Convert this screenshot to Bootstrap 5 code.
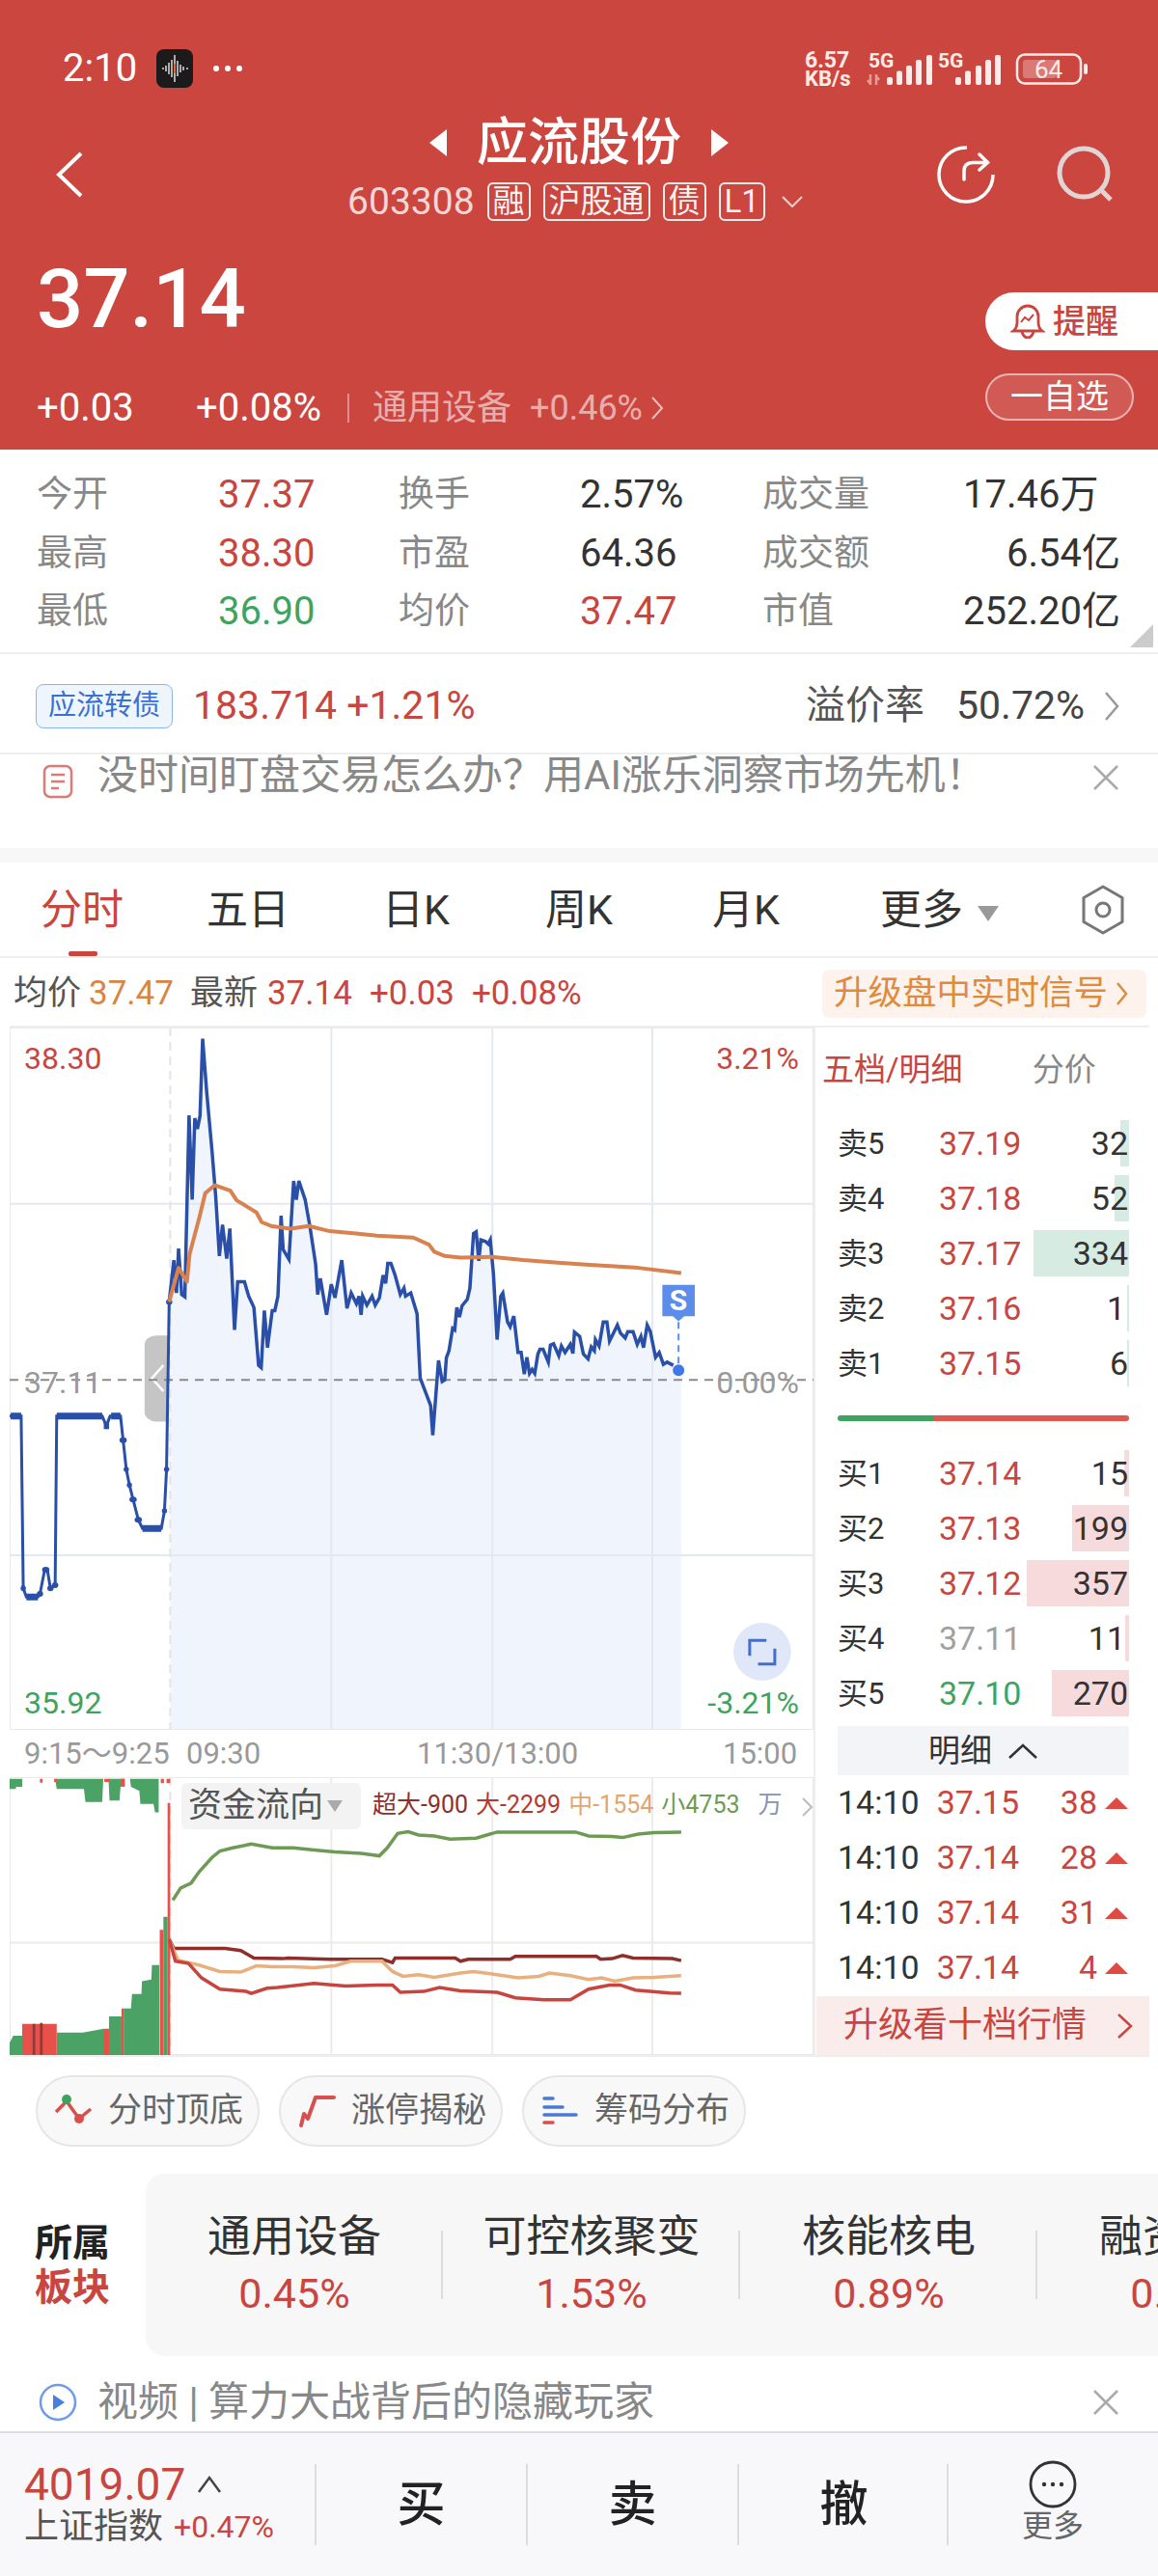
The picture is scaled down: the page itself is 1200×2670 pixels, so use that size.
<!DOCTYPE html>
<html lang="zh"><head><meta charset="utf-8"><title>应流股份</title>
<link href="https://cdn.jsdelivr.net/npm/bootstrap@5.3.0/dist/css/bootstrap.min.css" rel="stylesheet">
<style>
html,body{margin:0;width:1200px;height:2670px;overflow:hidden;background:#fff}
body{font-family:Roboto,"Noto Sans CJK SC",sans-serif;color:#333;line-height:1.2}
.rd{color:#c9453f}.gn{color:#3ea35f}.gy{color:#888}
.hdr{height:466px;background:#cc4640;color:#fff}
.sbar{padding:50px 70px 0 65px;height:92px}
.clock{font-size:40px;line-height:42px;width:97px}
.appic{width:38px;height:40px;background:#1c1a1a;border-radius:8px;margin-right:20px}
.nav-r{height:137px;padding-top:18px}
.side{width:300px}
.mid{width:600px}
.ttl{font-size:53px;line-height:76px;font-weight:500;height:76px;gap:31px}
.code{font-size:39px;line-height:40px;height:40px;margin-top:3px;margin-left:-8px;gap:13px}
.code .cd{color:rgba(255,255,255,.78)}
.tg{border:2px solid rgba(255,255,255,.9);border-radius:6px;font-size:33px;line-height:36px;height:40px;padding:0 4px;color:rgba(255,255,255,.95)}
.backi{margin:46px 0 0 56px}
.refi{margin:36px 0 0 66px}
.srci{margin:36px 0 0 54px}
.pr{font-size:85px;line-height:64px;font-weight:500;margin:49px 0 0 38px;height:64px}
.chg{margin:59px 0 0 38px;height:44px;font-size:40px;line-height:44px}
.chg .dim{color:rgba(255,255,255,.58);font-size:36px}
.vbar{width:2px;height:30px;background:rgba(255,255,255,.4)}
.rbtns{width:179px;margin-top:74px}
.remind{height:60px;background:#fff;color:#c9453f;border-radius:30px 0 0 30px;font-size:34px;padding-left:26px;gap:8px;font-weight:500}
.fav{width:154px;height:49px;border:2px solid rgba(255,255,255,.55);background:rgba(255,255,255,.11);border-radius:25px;font-size:34px;margin-top:24px}
.stats{display:grid;grid-template-columns:188px 187px 188px 189px 1fr auto;grid-auto-rows:60.5px;padding:17px 39px 0 38px;height:212px;font-size:37px;border-bottom:2px solid #eee;align-items:center;position:relative}
.stats .lb{color:#888}.stats .num{font-size:40px}
.corner{position:absolute;right:5px;bottom:5px;width:0;height:0;border-left:24px solid transparent;border-bottom:24px solid #ccc}
.bond{height:104px;border-bottom:2px solid #eee;padding:5px 40px 0 37px;font-size:41px}
.btag{width:142px;height:46px;border:1.5px solid #8db4ea;background:#eef5fd;color:#3a70d6;border-radius:8px;font-size:29px;line-height:43px;text-align:center;margin-right:21px}
.note{height:97px;padding:2px 40px 0 44px;align-items:flex-start;background:#fff}
.note .t{font-size:42px;line-height:40px;color:#888;margin-left:25px;white-space:nowrap}
.band{height:15px;background:#f7f7f7}
.tabs{height:99px;border-bottom:2px solid #eee;font-size:43px;position:relative;padding-top:23px;line-height:52px}
.tabu{position:absolute;left:71px;bottom:0;width:30px;height:5px;background:#c9453f;border-radius:2px}
.tb{position:absolute;top:23px}
.info{height:70px;font-size:35px;padding:3px 12px 0 14px}
.upg{height:50px;width:336px;background:#fdf3ec;color:#e08a3e;border-radius:8px;font-size:35.5px;padding-left:12px}
.chartrow{display:flex;height:1069px;border-top:2px solid #eee;border-bottom:2px solid #eee;margin:0 9px 0 10px}
.lcol{width:833px;position:relative}
.cv{display:block;width:833px}
.ln{fill:none;vector-effect:non-scaling-stroke}
.lab{position:absolute;font-size:32px;line-height:36px}
.axis{height:49px;font-size:31px;color:#999;position:relative;line-height:50px}
.axis span{position:absolute}
.fund{position:absolute;left:178px;top:783px;width:186px;height:48px;background:#f3f3f3;border-radius:6px;font-size:35px;line-height:48px;color:#555;padding-left:7px}
.leg{position:absolute;left:376px;top:790px;font-size:25px;line-height:32px;white-space:nowrap}
.rcol{width:348px;border-left:2px solid #eee;display:flex;flex-direction:column}
.ob{margin:0 21px 0 23px}
.obh{height:92px;font-size:33px;padding:26px 0 0 0;line-height:36px;margin-left:-16px}
.obr{height:57px;font-size:34px;position:relative;display:flex;align-items:center}
.obr .k{width:105px;font-size:31px;position:relative}
.obr .p{position:relative}
.obr .q{margin-left:auto;position:relative;padding-right:1px}
.dep{position:absolute;right:0;top:4px;height:48px}
.dg{background:#d6ece2}.dr{background:#f6dadc}
.split{height:57px;padding-top:25px}
.split i{display:block;height:6px;border-radius:3px;background:linear-gradient(90deg,#3ea35f 33%,#df5850 33%)}
.mx{height:51px;margin-top:5px;background:#f2f4f8;font-size:33px;gap:16px}
.tr{height:57px;font-size:34px;display:flex;align-items:center}
.tr .p{margin-left:18px}
.tr .q{margin-left:auto;margin-right:8px}
.tri{width:0;height:0;border-left:12.5px solid transparent;border-right:12.5px solid transparent;border-bottom:12px solid #df4a43;margin-right:1px}
.up10{height:61px;margin:1px 0 0 1px;background:#fbecec;color:#c9453f;font-size:36px;padding:0 15px 0 28px}
.pills{height:121px;padding:19px 0 0 37px;gap:20px}
.pil{width:232px;height:74px;border:2px solid #e6e6e6;background:#f8f8f8;border-radius:37px;font-size:35px;color:#666;padding-left:17px;gap:14px}
.sect{height:189px}
.sl{width:151px;padding-left:36px;font-size:39px;font-weight:700;line-height:46px;color:#222}
.scard{flex:1;background:#f7f7f7;border-radius:20px 0 0 20px;overflow:hidden;height:189px}
.si{flex:0 0 308px;text-align:center;position:relative;padding-top:40px;font-size:45px;line-height:52px;white-space:nowrap}
.si .pc{font-size:43px;line-height:48px;margin-top:8px}
.si::after{content:"";position:absolute;right:0;top:59px;width:2px;height:71px;background:#ddd}
.vid{height:78px;padding:18px 40px 0 40px;font-size:42px;color:#888;gap:21px;line-height:48px}
.foot{height:150px;background:#f8f8fb;border-top:2px solid #ddd}
.fidx{width:326px;padding:28px 0 0 25px}
.fidx .v{font-size:46px;line-height:50px;gap:12px}
.fidx .s{font-size:36px;line-height:44px;color:#555;gap:11px;margin-top:-3px}
.fidx .s b{font-size:32px;font-weight:400}
.fb{width:219px;height:84px;margin-top:32px;border-left:2px solid #ddd;font-size:50px;font-weight:500;color:#222}
.fmore{margin-top:28px;height:96px;width:216px;position:relative}
.fmore::before{content:"";position:absolute;left:-2px;top:4px;width:2px;height:84px;background:#ddd}
.fm{font-size:32px;color:#666;font-weight:400;line-height:36px}
</style></head><body>
<div class="hdr">
 <div class="sbar d-flex align-items-center">
  <div class="clock">2:10</div>
  <div class="appic d-flex align-items-center justify-content-center"><svg width="30" height="34" viewBox="0 0 30 34"><path d="M2 17h2M6 14v6M9 11v12M12 8v18M15 3v28M18 9v16M21 13v8M24 15v4M27 17h2" stroke="#ddd" stroke-width="1.500" fill="none"/><path d="M15 12v10" stroke="#e8663c" stroke-width="2"/></svg></div>
  <svg width="34" height="8" viewBox="0 0 34 8"><circle cx="4" cy="4" r="3" fill="#fff"/><circle cx="16" cy="4" r="3" fill="#fff"/><circle cx="28" cy="4" r="3" fill="#fff"/></svg>
  <svg class="ms-auto" width="300" height="50" viewBox="830 46 300 50" font-family="Roboto,sans-serif" font-weight="700" fill="#ffecea">
   <text x="834" y="70" font-size="23">6.57</text><text x="834" y="89" font-size="22">KB/s</text>
   <text x="900" y="70" font-size="21">5G</text><text x="972" y="70" font-size="21">5G</text>
   <path d="M902 77v11M899 83l3 4M908 88V77M911 83l-3-4" stroke="#e89a94" stroke-width="2.500" fill="none"/>
   <g fill="#ffecea"><rect x="919" y="80" width="6" height="8" rx="2"/><rect x="929" y="73.500" width="6" height="14.500" rx="2"/><rect x="939" y="68" width="6" height="20" rx="2"/><rect x="949" y="62" width="6" height="26" rx="2"/><rect x="960" y="57" width="6" height="31" rx="2"/>
   <rect x="990" y="80" width="6" height="8" rx="2"/><rect x="1000" y="73.500" width="6" height="14.500" rx="2"/><rect x="1011" y="68" width="6" height="20" rx="2"/><rect x="1021" y="62" width="6" height="26" rx="2"/><rect x="1031" y="57" width="6" height="31" rx="2"/></g>
   <rect x="1054" y="56.500" width="66" height="30" rx="8" fill="none" stroke="#ffecea" stroke-width="2.500"/><rect x="1060" y="62" width="35" height="19" rx="3" fill="#fff" opacity=".28"/>
   <rect x="1123" y="66" width="4" height="11" rx="2"/><text x="1072" y="81" font-size="26" font-weight="400">64</text>
  </svg>
 </div>
 <div class="nav-r d-flex">
  <div class="side"><svg class="backi" width="32" height="50" viewBox="0 0 32 50"><path d="M28 3L5 25l23 22" fill="none" stroke="#fff" stroke-width="4"/></svg></div>
  <div class="mid">
   <div class="ttl d-flex justify-content-center align-items-center"><svg width="18" height="28" viewBox="0 0 18 28"><path d="M18 0v28L0 14z" fill="#fff"/></svg><span>应流股份</span><svg width="18" height="28" viewBox="0 0 18 28"><path d="M0 0v28l18-14z" fill="#fff"/></svg></div>
   <div class="code d-flex justify-content-center align-items-center"><span class="cd">603308</span><span class="tg">融</span><span class="tg">沪股通</span><span class="tg">债</span><span class="tg">L1</span><svg class="ms-1" width="22" height="12" viewBox="0 0 22 12"><path d="M1 1l10 10L21 1" fill="none" stroke="rgba(255,255,255,.75)" stroke-width="2"/></svg></div>
  </div>
  <div class="side d-flex align-items-start"><svg class="refi" width="70" height="70" viewBox="0 0 70 70" fill="none" stroke="#fff" stroke-width="3.500"><path d="M36 7A28 28 0 1 0 63 35"/><path d="M33 40V31q0-8 9-8.500H57M49 14l8.500 8.500L49 30" stroke-linecap="round"/></svg><svg class="srci" width="70" height="70" viewBox="0 0 70 70" fill="none" stroke="#e0d5d4" stroke-width="5"><circle cx="33" cy="33" r="25"/><path d="M51 51l10 10"/></svg></div>
 </div>
 <div class="d-flex justify-content-between">
  <div>
   <div class="pr">37.14</div>
   <div class="chg d-flex align-items-center"><span style="width:165px">+0.03</span><span style="width:157px">+0.08%</span><span class="vbar"></span><span class="dim ms-4" style="width:163px">通用设备</span><span class="dim" style="width:125px">+0.46%</span><svg width="14" height="26" viewBox="0 0 14 26"><path d="M2 2l10 11L2 24" fill="none" stroke="rgba(255,255,255,.65)" stroke-width="2"/></svg></div>
  </div>
  <div class="rbtns">
   <div class="remind d-flex align-items-center"><svg width="36" height="36" viewBox="0 0 36 36" fill="none" stroke="#c9453f" stroke-width="2.800"><path d="M3 28q4-3 4-9v-6a11 11 0 0 1 22 0v6q0 6 4 9zM12 29q2 6 6 6t6-6"/><path d="M11 19l4-5 4 3 5-6" stroke-width="2"/></svg><span>提醒</span></div>
   <div class="fav d-flex align-items-center justify-content-center"><span>一自选</span></div>
  </div>
 </div>
</div>

<div class="stats">
 <span class="lb">今开</span><span class="num rd">37.37</span><span class="lb">换手</span><span class="num">2.57%</span><span class="lb">成交量</span><span class="num">17.46万</span>
 <span class="lb">最高</span><span class="num rd">38.30</span><span class="lb">市盈</span><span class="num">64.36</span><span class="lb">成交额</span><span class="num text-end">6.54亿</span>
 <span class="lb">最低</span><span class="num gn">36.90</span><span class="lb">均价</span><span class="num rd">37.47</span><span class="lb">市值</span><span class="num">252.20亿</span>
 <i class="corner"></i>
</div>

<div class="bond d-flex align-items-center">
 <span class="btag">应流转债</span><span class="rd">183.714 +1.21%</span>
 <span class="ms-auto" style="color:#555">溢价率</span><span style="color:#444;width:129px;margin-left:33px">50.72%</span>
 <svg class="ms-4" width="16" height="32" viewBox="0 0 16 32"><path d="M2 2l12 14L2 30" fill="none" stroke="#999" stroke-width="2.500"/></svg>
</div>

<div class="note d-flex">
 <svg class="mt-2" width="32" height="36" viewBox="0 0 32 36" fill="none" stroke="#dc7a76" stroke-width="2.500"><rect x="2" y="2" width="28" height="32" rx="6"/><path d="M9 11h14M9 18h14M9 25h8"/></svg>
 <span class="t">没时间盯盘交易怎么办？用AI涨乐洞察市场先机！</span>
 <svg class="ms-auto mt-2" width="28" height="28" viewBox="0 0 28 28"><path d="M2 2l24 24M26 2L2 26" stroke="#aaa" stroke-width="2.500"/></svg>
</div>
<div class="band"></div>

<div class="tabs">
 <span class="tb rd" style="left:42px">分时</span><span class="tb" style="left:214px">五日</span><span class="tb" style="left:396px">日K</span><span class="tb" style="left:565px">周K</span><span class="tb" style="left:738px">月K</span><span class="tb" style="left:912px">更多</span>
 <svg class="tb" style="left:1013px;top:45px" width="22" height="16" viewBox="0 0 22 16"><path d="M0 0h22L11 16z" fill="#999"/></svg>
 <svg class="tb" style="left:1120px;top:23px" width="46" height="52" viewBox="0 0 46 52" fill="none" stroke="#777" stroke-width="3"><path d="M23 2l20 11.500v25L23 50 3 38.500v-25z" stroke-linejoin="round"/><circle cx="23" cy="26" r="7"/></svg>
 <i class="tabu"></i>
</div>

<div class="info d-flex align-items-center">
 <span style="color:#555">均价</span><span class="ms-2" style="color:#d88444">37.47</span>
 <span style="margin-left:17px;color:#555">最新</span><span class="rd" style="margin-left:10px">37.14</span>
 <span class="rd" style="margin-left:18px">+0.03</span><span class="rd" style="margin-left:18px">+0.08%</span>
 <div class="upg ms-auto d-flex align-items-center gap-2"><span>升级盘中实时信号</span><svg width="13" height="26" viewBox="0 0 13 26"><path d="M2 2l9 11-9 11" fill="none" stroke="#e08a3e" stroke-width="2.500"/></svg></div>
</div>

<div class="chartrow">
 <div class="lcol">
  <svg class="cv" height="728" viewBox="18 15 1537 2183" preserveAspectRatio="none">
   <polygon fill="#eff4fd" points="325,868 332,738 337,840 341,702 347,845 353,852 361,288 367,550 372,297 377,330 382,290 387,50 395,220 405,400 412,540 419,725 425,628 433,733 439,640 448,955 454,805 467,805 475,850 485,885 494,1065 499,1072 505,895 511,1010 520,895 525,895 531,850 537,600 541,705 552,735 561,492 566,550 571,492 583,550 592,632 603,750 607,845 612,795 624,908 633,813 640,855 653,738 663,888 671,840 681,873 686,850 690,908 693,850 701,878 711,850 717,878 725,855 732,785 737,810 741,748 747,748 755,785 765,845 772,825 775,850 785,840 797,905 803,1105 823,1190 827,1282 838,1050 845,1115 850,1110 853,1042 858,1020 865,950 869,955 873,885 878,915 883,880 893,860 898,825 905,655 910,650 915,740 919,675 928,680 933,688 937,675 943,780 950,985 957,850 961,840 970,930 975,945 982,912 990,1025 996,1025 1002,1092 1007,1040 1012,1090 1017,1078 1022,1090 1028,1030 1032,1015 1038,1015 1048,1055 1052,1002 1058,998 1068,1035 1073,1005 1080,1025 1090,1000 1095,1028 1098,962 1108,975 1115,1030 1124,1045 1130,1008 1136,1020 1138,985 1145,1005 1153,930 1160,930 1165,990 1180,940 1186,965 1195,980 1200,960 1210,960 1218,1000 1225,975 1230,1010 1237,940 1243,960 1253,1040 1260,1025 1268,1062 1275,1055 1287,1065 1297,1080 1302,1080 1302,2198 325,2198"/>
   <path class="ln" stroke="#e4e8f0" stroke-width="2" d="M633 15V2198M941 15V2198M1247 15V2198M18 563H1555M18 1655H1555"/>
   <path class="ln" d="M325 15V2198" stroke="#e4e4e4" stroke-width="2" stroke-dasharray="9 6"/>
   <rect class="ln" x="18" y="15" width="1537" height="2183" stroke="#e9e9e9" stroke-width="2"/>
   <path d="M322 972h-24a22 30 0 0 0-22 30v208a22 30 0 0 0 22 30h24z" fill="#c5c5c5"/>
   <path class="ln" d="M312 1065l-22 40 22 40" stroke="#fff" stroke-width="2.500"/>
   <path class="ln" d="M18 1110H1555" stroke="#8a8a8a" stroke-width="2" stroke-dasharray="9 7"/>
   <polyline class="ln" stroke="#2a4fa8" stroke-width="3" points="18,1223 40,1223 44,1758 50,1785 72,1785 76,1775 85,1700 90,1700 96,1758 105,1748 108,1223 195,1223 203,1253 210,1223 230,1223 235,1298 241,1388 247,1437 254,1482 264,1545 272,1572 308,1572 314,1517 318,1388 323,868"/>
   <path class="ln" stroke="#2a4fa8" stroke-width="7" d="M20 1223H40M108 1223H195M212 1223H230M50 1785H72M272 1572H308M198 1253H208"/>
   <g fill="#2a4fa8"><ellipse cx="44" cy="1758" rx="5" ry="9"/><ellipse cx="76" cy="1775" rx="6" ry="9"/><ellipse cx="87" cy="1700" rx="7" ry="9"/><ellipse cx="96" cy="1758" rx="6" ry="9"/><ellipse cx="105" cy="1748" rx="6" ry="9"/><ellipse cx="235" cy="1298" rx="7" ry="9"/><ellipse cx="241" cy="1388" rx="5" ry="8"/><ellipse cx="247" cy="1437" rx="5" ry="8"/><ellipse cx="254" cy="1482" rx="7" ry="9"/><ellipse cx="264" cy="1545" rx="7" ry="9"/><ellipse cx="314" cy="1517" rx="5" ry="8"/><ellipse cx="318" cy="1388" rx="5" ry="8"/><ellipse cx="323" cy="868" rx="6" ry="9"/></g>
   <polyline class="ln" stroke="#2a4fa8" stroke-width="3.500" points="323,868 332,738 337,840 341,702 347,845 353,852 361,288 367,550 372,297 377,330 382,290 387,50 395,220 405,400 412,540 419,725 425,628 433,733 439,640 448,955 454,805 467,805 475,850 485,885 494,1065 499,1072 505,895 511,1010 520,895 525,895 531,850 537,600 541,705 552,735 561,492 566,550 571,492 583,550 592,632 603,750 607,845 612,795 624,908 633,813 640,855 653,738 663,888 671,840 681,873 686,850 690,908 693,850 701,878 711,850 717,878 725,855 732,785 737,810 741,748 747,748 755,785 765,845 772,825 775,850 785,840 797,905 803,1105 823,1190 827,1282 838,1050 845,1115 850,1110 853,1042 858,1020 865,950 869,955 873,885 878,915 883,880 893,860 898,825 905,655 910,650 915,740 919,675 928,680 933,688 937,675 943,780 950,985 957,850 961,840 970,930 975,945 982,912 990,1025 996,1025 1002,1092 1007,1040 1012,1090 1017,1078 1022,1090 1028,1030 1032,1015 1038,1015 1048,1055 1052,1002 1058,998 1068,1035 1073,1005 1080,1025 1090,1000 1095,1028 1098,962 1108,975 1115,1030 1124,1045 1130,1008 1136,1020 1138,985 1145,1005 1153,930 1160,930 1165,990 1180,940 1186,965 1195,980 1200,960 1210,960 1218,1000 1225,975 1230,1010 1237,940 1243,960 1253,1040 1260,1025 1268,1062 1275,1055 1287,1065"/>
   <polyline class="ln" stroke="#d9824f" stroke-width="4" stroke-linejoin="round" points="323,868 341,762 357,805 362,720 380,610 392,530 410,505 440,522 452,552 480,580 490,590 500,620 520,633 555,640 590,632 630,648 680,655 720,662 790,668 820,690 830,712 850,725 880,730 940,728 1000,738 1060,745 1120,752 1220,762 1302,778"/>
   <path class="ln" d="M1297 930V1110" stroke="#5c8dea" stroke-width="2" stroke-dasharray="7 5"/>
   <path d="M1266 815h62v97h-20l-11 16-11-16h-20z" fill="#5c8dea"/>
   <ellipse cx="1297" cy="1080" rx="11" ry="18" fill="#3e78e8"/>
   <ellipse cx="1457" cy="1955" rx="55" ry="90" fill="#dfe7f8"/>
   <path class="ln" d="M1465 1920h-32v48M1481 1945v48h-32" stroke="#3e6fd6" stroke-width="3"/>
  </svg>
  <span class="lab rd" style="left:15px;top:14px">38.30</span>
  <span class="lab rd" style="right:15px;top:14px">3.21%</span>
  <span class="lab" style="left:15px;top:350px;color:#999">37.11</span>
  <span class="lab" style="right:15px;top:350px;color:#999">0.00%</span>
  <span class="lab gn" style="left:15px;top:682px">35.92</span>
  <span class="lab gn" style="right:15px;top:682px">-3.21%</span>
  <span class="lab fw-bold text-white" style="left:676px;top:267px;line-height:32px;font-size:30px;width:34px;text-align:center">S</span>
  <div class="axis"><span style="left:15px">9:15～9:25</span><span style="left:183px">09:30</span><span style="left:422px">11:30/13:00</span><span style="left:739px">15:00</span></div>
  <svg class="cv" height="288" viewBox="18 185 1537 865" preserveAspectRatio="none">
   <path class="ln" d="M633 185V1050M941 185V1050M1247 185V1050M18 700H1555" stroke="#ebebeb" stroke-width="2"/>
   <rect class="ln" x="18" y="185" width="1537" height="865" stroke="#e9e9e9" stroke-width="2"/>
   <path class="ln" d="M325 185V1050" stroke="#e4e4e4" stroke-width="2" stroke-dasharray="9 6"/>
   <path fill="#4aa364" d="M18 190v32h12v-7h12v-25h63l3 32h52l3 40h32l2-72h10l2 68h19l2-43h8v-25h10l2 25 16 13 2 40h25l3 27h7V190z"/>
   <path fill="#e8504a" d="M76 190h5v12h-5zM103 190h5v10h-5zM199 190h10v10h-10zM230 190h8v22h-8zM307 190h6v14h-6zM318 190h7v14h-7z"/>
   <path fill="#4aa364" d="M18 1050V1012l7-22h17v60zM108 1050V980h50l40-12h12v82zM208 1050V930h24v120zM236 1050V905h14l2-45h18l1-40 18-5 1-45h14v280h-60zM312 1050V620h8v430z"/>
   <path fill="#e8504a" d="M42 1050V953h66v97zM198 1050V970h10v80zM232 1050V905h4v145zM305 1050V660h7v390zM320 1050V265h5v785z"/>
   <path fill="#8e3a3a" d="M62 1050V953h5v97zM76 1050V950h5v100z"/>
   <polyline class="ln" stroke="#6d9b56" stroke-width="3.500" points="330,568 345,530 365,515 380,480 405,435 420,415 445,405 480,393 520,405 560,405 600,412 640,418 690,422 725,430 740,405 760,360 780,355 800,365 830,368 860,378 910,375 950,356 1100,356 1125,368 1170,370 1190,373 1220,362 1250,358 1302,356"/>
   <polyline class="ln" stroke="#8f2f2b" stroke-width="3.500" points="323,690 332,718 430,718 460,725 485,748 540,750 550,748 630,752 730,752 750,762 755,748 870,748 880,758 895,752 975,752 985,743 1140,743 1148,752 1170,750 1190,740 1210,748 1285,750 1302,756"/>
   <polyline class="ln" stroke="#e8b07f" stroke-width="3.500" points="323,690 340,755 380,770 420,790 460,792 490,772 520,775 560,775 600,778 640,772 670,758 730,758 750,790 770,805 800,800 830,808 880,795 905,790 950,800 990,810 1030,805 1050,795 1090,803 1125,815 1150,810 1175,820 1210,810 1250,808 1302,803"/>
   <polyline class="ln" stroke="#c8443f" stroke-width="3.500" points="323,690 335,758 360,765 385,810 420,845 470,852 480,858 510,842 530,840 600,827 660,835 720,832 750,832 765,855 810,852 840,840 880,850 950,855 985,872 1040,878 1090,878 1125,845 1165,832 1185,832 1215,848 1280,857 1302,858"/>
  </svg>
  <div class="fund d-flex align-items-center">资金流向<svg class="ms-1" width="16" height="12" viewBox="0 0 16 12"><path d="M0 0h16L8 12z" fill="#aaa"/></svg></div>
  <div class="leg d-flex"><span style="color:#8f2f2b">超大-900 </span><span class="ms-2" style="color:#b33a33">大-2299</span><span class="ms-2" style="color:#e3a56d">中-1554</span><span class="ms-2" style="color:#6d9b56">小4753</span><span style="color:#8494b4;margin-left:19px">万</span><svg style="margin:7px 0 0 19px" width="13" height="22" viewBox="0 0 13 22"><path d="M2 2l9 9-9 9" fill="none" stroke="#bbb" stroke-width="2"/></svg></div>
 </div>
 <div class="rcol">
  <div class="ob">
   <div class="obh d-flex"><span class="rd">五档/明细</span><span class="gy" style="margin-left:72px">分价</span></div>
   <div class="obr"><i class="dep dg" style="width:9px"></i><span class="k">卖5</span><span class="p rd">37.19</span><span class="q">32</span></div>
   <div class="obr"><i class="dep dg" style="width:15px"></i><span class="k">卖4</span><span class="p rd">37.18</span><span class="q">52</span></div>
   <div class="obr"><i class="dep dg" style="width:99px"></i><span class="k">卖3</span><span class="p rd">37.17</span><span class="q">334</span></div>
   <div class="obr"><i class="dep dg" style="width:2px"></i><span class="k">卖2</span><span class="p rd">37.16</span><span class="q" style="padding-right:4px">1</span></div>
   <div class="obr"><i class="dep dg" style="width:2px"></i><span class="k">卖1</span><span class="p rd">37.15</span><span class="q">6</span></div>
   <div class="split"><i></i></div>
   <div class="obr"><i class="dep dr" style="width:5px"></i><span class="k">买1</span><span class="p rd">37.14</span><span class="q">15</span></div>
   <div class="obr"><i class="dep dr" style="width:59px"></i><span class="k">买2</span><span class="p rd">37.13</span><span class="q">199</span></div>
   <div class="obr"><i class="dep dr" style="width:106px"></i><span class="k">买3</span><span class="p rd">37.12</span><span class="q">357</span></div>
   <div class="obr"><i class="dep dr" style="width:4px"></i><span class="k">买4</span><span class="p" style="color:#a0a0a0">37.11</span><span class="q" style="padding-right:4px">11</span></div>
   <div class="obr"><i class="dep dr" style="width:80px"></i><span class="k">买5</span><span class="p gn">37.10</span><span class="q">270</span></div>
   <div class="mx d-flex align-items-center justify-content-center"><span>明细</span><svg width="32" height="18" viewBox="0 0 32 18"><path d="M2 16L16 3l14 13" fill="none" stroke="#333" stroke-width="2.500"/></svg></div>
   <div class="tr"><span>14:10</span><span class="p rd">37.15</span><span class="q rd">38</span><i class="tri"></i></div>
   <div class="tr"><span>14:10</span><span class="p rd">37.14</span><span class="q rd">28</span><i class="tri"></i></div>
   <div class="tr"><span>14:10</span><span class="p rd">37.14</span><span class="q rd">31</span><i class="tri"></i></div>
   <div class="tr"><span>14:10</span><span class="p rd">37.14</span><span class="q rd">4</span><i class="tri"></i></div>
  </div>
  <div class="up10 d-flex align-items-center justify-content-between"><span>升级看十档行情</span><svg width="20" height="30" viewBox="0 0 20 30"><path d="M3 3l13 12L3 27" fill="none" stroke="#c9453f" stroke-width="2.500"/></svg></div>
 </div>
</div>

<div class="pills d-flex">
 <div class="pil d-flex align-items-center"><svg width="42" height="36" viewBox="0 0 42 36"><path d="M2 19l11-11 13 18 12-10" fill="none" stroke="#d8504c" stroke-width="3.500"/><circle cx="13" cy="6" r="5" fill="#3ea35f"/><circle cx="26" cy="26" r="5" fill="#d8504c"/></svg><span>分时顶底</span></div>
 <div class="pil d-flex align-items-center"><svg width="42" height="36" viewBox="0 0 42 36"><path d="M4 33l3-12 4 5 8-22h19" fill="none" stroke="#d8504c" stroke-width="4" stroke-linecap="round" stroke-linejoin="round"/></svg><span>涨停揭秘</span></div>
 <div class="pil d-flex align-items-center"><svg width="42" height="36" viewBox="0 0 42 36" stroke-width="3.500" stroke-linecap="round"><path d="M4 5h9M4 14h19M4 22h33" stroke="#4a78d8"/><path d="M4 30h9" stroke="#d8504c"/></svg><span>筹码分布</span></div>
</div>

<div class="sect d-flex">
 <div class="sl d-flex flex-column justify-content-center"><span>所属</span><span class="rd">板块</span></div>
 <div class="scard d-flex">
  <div class="si"><div>通用设备</div><div class="pc rd">0.45%</div></div>
  <div class="si"><div>可控核聚变</div><div class="pc rd">1.53%</div></div>
  <div class="si"><div>核能核电</div><div class="pc rd">0.89%</div></div>
  <div class="si"><div>融资融券</div><div class="pc rd">0.65%</div></div>
 </div>
</div>

<div class="vid d-flex align-items-center">
 <svg width="40" height="40" viewBox="0 0 40 40"><circle cx="20" cy="20" r="18" fill="none" stroke="#6f9be8" stroke-width="2.500"/><path d="M15 12l12 8-12 8z" fill="#4a7fe0"/></svg>
 <span>视频 | 算力大战背后的隐藏玩家</span>
 <svg class="ms-auto" width="28" height="28" viewBox="0 0 28 28"><path d="M2 2l24 24M26 2L2 26" stroke="#aaa" stroke-width="2.500"/></svg>
</div>

<div class="foot d-flex">
 <div class="fidx">
  <div class="v d-flex align-items-center rd"><span>4019.07</span><svg width="26" height="20" viewBox="0 0 26 20"><path d="M2 18L13 3l11 15" fill="none" stroke="#444" stroke-width="2.500"/></svg></div>
  <div class="s d-flex align-items-center"><span>上证指数</span><b class="rd">+0.47%</b></div>
 </div>
 <div class="fb d-flex align-items-center justify-content-center">买</div>
 <div class="fb d-flex align-items-center justify-content-center">卖</div>
 <div class="fb d-flex align-items-center justify-content-center">撤</div>
 <div class="fmore d-flex flex-column align-items-center justify-content-start">
  <svg width="50" height="50" viewBox="0 0 50 50"><circle cx="25" cy="25" r="23" fill="none" stroke="#333" stroke-width="2.800"/><circle cx="16" cy="25" r="2.200" fill="#333"/><circle cx="25" cy="25" r="2.200" fill="#333"/><circle cx="34" cy="25" r="2.200" fill="#333"/></svg>
  <span class="fm">更多</span>
 </div>
</div>
</body></html>
